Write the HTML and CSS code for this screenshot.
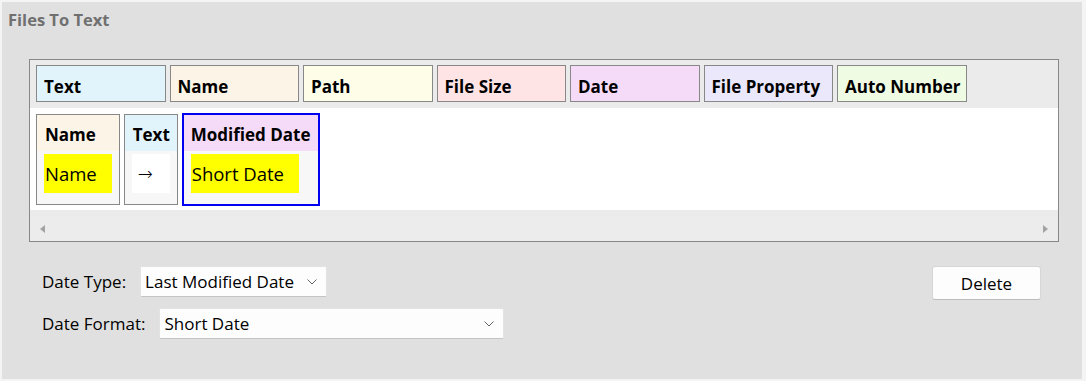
FILE: index.html
```html
<!DOCTYPE html>
<html lang="en">
<head>
    <meta charset="UTF-8">
    <title>Files To Text</title>
    <link rel="stylesheet" href="styles.css">
</head>
<body>
    <div class="panel">
        <div class="panel-title">Files To Text</div>

        <div class="builder">
            <div class="tab-strip">
                <div class="tab tab-text">Text</div>
                <div class="tab tab-name">Name</div>
                <div class="tab tab-path">Path</div>
                <div class="tab tab-size">File Size</div>
                <div class="tab tab-date">Date</div>
                <div class="tab tab-prop">File Property</div>
                <div class="tab tab-auto">Auto Number</div>
            </div>

            <div class="pieces">
                <div class="piece">
                    <div class="piece-head tab-name">Name</div>
                    <div class="piece-body"><span class="piece-value hl">Name</span></div>
                </div>
                <div class="piece">
                    <div class="piece-head tab-text">Text</div>
                    <div class="piece-body"><span class="piece-value plain">→</span></div>
                </div>
                <div class="piece selected">
                    <div class="piece-head tab-date">Modified Date</div>
                    <div class="piece-body"><span class="piece-value hl">Short Date</span></div>
                </div>
            </div>

            <div class="hscroll">
                <span class="arrow left"></span>
                <span class="arrow right"></span>
            </div>
        </div>

        <div class="options">
            <div class="fields">
                <div class="field">
                    <label>Date Type:</label>
                    <div class="combo combo-type">
                        <span>Last Modified Date</span>
                        <svg width="10" height="6" viewBox="0 0 10 6"><path d="M0.5 0.5 L5 5 L9.5 0.5" fill="none" stroke="#666" stroke-width="1"/></svg>
                    </div>
                </div>
                <div class="field">
                    <label>Date Format:</label>
                    <div class="combo combo-format">
                        <span>Short Date</span>
                        <svg width="10" height="6" viewBox="0 0 10 6"><path d="M0.5 0.5 L5 5 L9.5 0.5" fill="none" stroke="#666" stroke-width="1"/></svg>
                    </div>
                </div>
            </div>
            <button class="btn">Delete</button>
        </div>
    </div>
</body>
</html>
```

FILE: styles.css
```css
body {
    margin: 0;
    background-color: #f4f4f4;
    font-family: 'Open Sans', 'Noto Sans', sans-serif;
    color: #000;
}

.panel {
    margin: 2px;
    width: 1080px;
    height: 377px;
    box-sizing: border-box;
    background-color: #e0e0e0;
    padding: 8px 0 0 0;
}

.panel-title {
    margin-left: 6px;
    font-size: 16.5px;
    font-weight: bold;
    color: #707070;
    line-height: 20px;
}

.builder {
    margin: 29px 0 0 27px;
    width: 1028px;
    border: 1px solid #888;
    background-color: #ebebeb;
}

.tab-strip {
    display: flex;
    gap: 4px;
    padding: 5px 6px 6px 6px;
}

.tab {
    width: 129.5px;
    height: 37px;
    box-sizing: border-box;
    border: 1px solid #888;
    padding: 10px 0 0 7px;
    font-size: 17px;
    font-weight: bold;
    line-height: 22px;
    white-space: nowrap;
}

.tab-text { background-color: #e2f4fb; }
.tab-name { background-color: #fdf4e8; }
.tab-path { background-color: #fefde8; }
.tab-size { background-color: #fee4e4; }
.tab-date { background-color: #f6dbf8; }
.tab-prop { background-color: #ebe8fc; }
.tab-auto { background-color: #f0fbe3; }

.pieces {
    display: flex;
    align-items: center;
    gap: 4px;
    height: 102px;
    padding: 0 6px;
    background-color: #fff;
}

.piece {
    border: 1px solid #888;
    background-color: #f7f7f7;
    height: 91px;
    box-sizing: border-box;
}

.piece.selected {
    border: 2px solid #0000f0;
    height: 93px;
}

.piece-head {
    height: 36px;
    padding: 0 6px 0 8px;
    font-size: 17px;
    font-weight: bold;
    line-height: 39px;
    white-space: nowrap;
}

.piece.selected .piece-head {
    padding: 0 7px 0 7px;
}

.piece-body {
    padding: 3px 7px 0 7px;
}

.piece-value {
    display: inline-block;
    height: 39px;
    line-height: 39px;
    font-size: 18.5px;
    white-space: nowrap;
}

.piece-value.hl {
    background-color: #ffff00;
    padding: 0 15px 0 1px;
}

.piece-value.plain {
    width: 38px;
    box-sizing: border-box;
    background-color: #fff;
    padding: 0 0 0 6px;
    font-family: 'DejaVu Sans', sans-serif;
    font-weight: 200;
    font-size: 18px;
}

.hscroll {
    height: 25px;
    margin-top: 6px;
    background-color: #ececec;
    display: flex;
    justify-content: space-between;
    align-items: center;
    padding: 0 10px;
}

.arrow {
    width: 0;
    height: 0;
    border-top: 4px solid transparent;
    border-bottom: 4px solid transparent;
}

.arrow.left { border-right: 5px solid #a3a3a3; }
.arrow.right { border-left: 5px solid #a3a3a3; }

.options {
    display: flex;
    justify-content: space-between;
    align-items: flex-start;
    margin: 24px 41px 0 40px;
}

.fields {
    display: flex;
    flex-direction: column;
    gap: 11px;
}

.field {
    display: flex;
    align-items: center;
    font-size: 17px;
}

.field label {
    margin-right: 14px;
}

.combo {
    height: 31px;
    box-sizing: border-box;
    background-color: #fdfdfd;
    border: 1px solid #e3e3e3;
    border-bottom-color: #c4c4c4;
    border-radius: 2px;
    display: flex;
    align-items: center;
    justify-content: space-between;
    padding: 0 9px 0 4px;
    font-size: 17px;
}

.combo-type { width: 187px; }
.combo-format { width: 345px; }

.btn {
    width: 109px;
    height: 34px;
    background-color: #fdfdfd;
    border: 1px solid #d6d6d6;
    border-bottom-color: #bcbcbc;
    border-radius: 3px;
    font-family: inherit;
    font-size: 17px;
    color: #000;
    padding: 0;
}
```
